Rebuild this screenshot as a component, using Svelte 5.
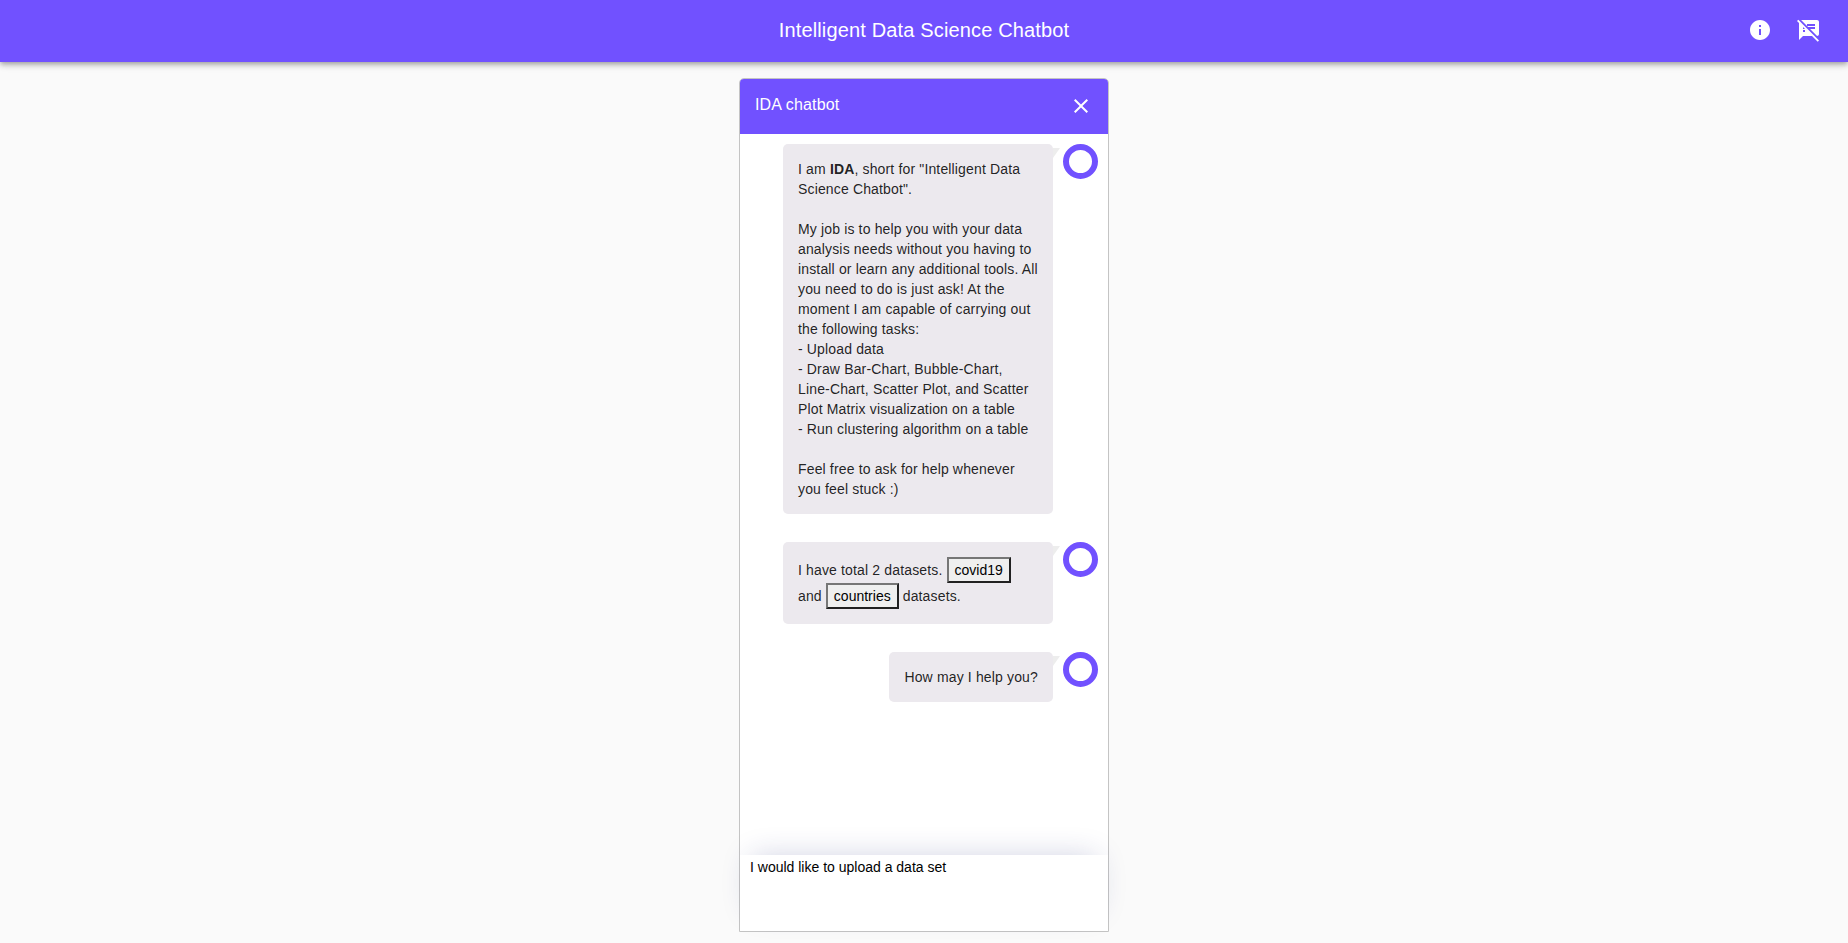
<script>
  let draft = $state('I would like to upload a data set');
</script>

<div class="page">
  <header class="appbar">
    <h1>Intelligent Data Science Chatbot</h1>
    <nav>
      <svg viewBox="0 0 24 24"><path d="M12 2C6.48 2 2 6.48 2 12s4.48 10 10 10 10-4.48 10-10S17.52 2 12 2zm1 15h-2v-6h2v6zm0-8h-2V7h2v2z" /></svg>
      <svg viewBox="0 0 24 24"><path d="M10.54 11l-.54-.54L7.54 8 6 6.46 2.38 2.84 1.27 1.73 0 3l2.01 2.01L2 22l4-4h9l5.73 5.73L22 22.46 17.54 18l-7-7zM8 14H6v-2h2v2zm-2-3V9l2 2H6zm14-9H4.08L10 7.92V6h8v2h-7.92l1 1H18v2h-4.92l6.99 6.99C21.14 17.95 22 17.08 22 16V4c0-1.1-.9-2-2-2z" /></svg>
    </nav>
  </header>

  <main class="chat">
    <div class="chat-head">
      <span>IDA chatbot</span>
      <svg viewBox="0 0 24 24"><path d="M19 6.41L17.59 5 12 10.59 6.41 5 5 6.41 10.59 12 5 17.59 6.41 19 12 13.41 17.59 19 19 17.59 13.41 12z" /></svg>
    </div>
    <div class="messages">
      <div class="row">
        <div class="bubble">
          I am <b>IDA</b>, short for "Intelligent Data Science Chatbot".<br /><br />
          My job is to help you with your data analysis needs without you having to install or learn any additional tools. All you need to do is just ask! At the moment I am capable of carrying out the following tasks:<br />
          - Upload data<br />
          - Draw Bar-Chart, Bubble-Chart, Line-Chart, Scatter Plot, and Scatter Plot Matrix visualization on a table<br />
          - Run clustering algorithm on a table<br /><br />
          Feel free to ask for help whenever you feel stuck :)
        </div>
        <div class="avatar"></div>
      </div>
      <div class="row">
        <div class="bubble">
          I have total 2 datasets. <button>covid19</button> and <button>countries</button> datasets.
        </div>
        <div class="avatar"></div>
      </div>
      <div class="row">
        <div class="bubble">How may I help you?</div>
        <div class="avatar"></div>
      </div>
    </div>
    <textarea bind:value={draft} spellcheck="false"></textarea>
  </main>
</div>

<style>
  :global(body) {
    margin: 0;
    background: #fafafa;
  }
  .page {
    height: 943px;
    overflow: hidden;
    font-family: 'Liberation Sans', Arial, sans-serif;
    font-size: 14px;
    line-height: 20px;
    letter-spacing: 0.15px;
    color: rgba(0, 0, 0, 0.87);
  }
  .appbar {
    height: 62px;
    display: grid;
    grid-template-columns: 1fr auto 1fr;
    align-items: center;
    background: #7151ff;
    color: #fff;
    box-shadow: 0 2px 4px -1px rgba(0, 0, 0, 0.2), 0 4px 5px rgba(0, 0, 0, 0.14), 0 1px 10px rgba(0, 0, 0, 0.12);
  }
  h1 {
    grid-column: 2;
    margin: 0 0 2px;
    font-size: 20px;
    font-weight: 400;
    line-height: 32px;
  }
  nav {
    display: flex;
    justify-content: flex-end;
    gap: 25px;
    padding: 0 27px 2px 0;
  }
  svg {
    display: block;
    width: 24px;
    height: 24px;
    fill: #fff;
  }
  .chat {
    box-sizing: border-box;
    width: 370px;
    height: 854px;
    margin: 16px auto 0;
    display: flex;
    flex-direction: column;
    border: 1px solid #c4c4c4;
    border-radius: 5px 5px 0 0;
    background: #fff;
  }
  .chat-head {
    box-sizing: border-box;
    height: 55px;
    flex: none;
    padding: 0 15px;
    display: flex;
    justify-content: space-between;
    align-items: center;
    border-radius: 4px 4px 0 0;
    background: #7151ff;
    color: #fff;
    font-size: 16px;
  }
  .chat-head span {
    margin-bottom: 4px;
  }
  .chat-head svg {
    margin-bottom: 2px;
  }
  .messages {
    flex: 1;
    display: flex;
    flex-direction: column;
    gap: 28px;
    padding: 10px 10px 0;
  }
  .row {
    display: flex;
    justify-content: flex-end;
    align-items: flex-start;
    gap: 10px;
  }
  .bubble {
    position: relative;
    box-sizing: border-box;
    max-width: 270px;
    padding: 15px;
    border-radius: 5px;
    background: #ece9ee;
  }
  .bubble::after {
    content: '';
    position: absolute;
    top: 4px;
    left: 100%;
    width: 7px;
    height: 10px;
    background: #ededed;
    clip-path: polygon(0 0, 100% 0, 0 100%);
  }
  button {
    padding: 1px 6px;
    border: 2px solid;
    border-color: #767676 #212121 #212121 #767676;
    border-radius: 0;
    background: #efefef;
    color: #000;
    font: inherit;
    letter-spacing: 0;
  }
  .avatar {
    box-sizing: border-box;
    width: 35px;
    height: 35px;
    flex: none;
    border: 6px solid #7151ff;
    border-radius: 50%;
    background: #fff;
  }
  textarea {
    box-sizing: border-box;
    display: block;
    width: 100%;
    height: 76px;
    flex: none;
    margin: 0;
    padding: 2px 10px;
    border: 0;
    outline: 0;
    resize: none;
    background: #fff;
    color: #000;
    font: inherit;
    letter-spacing: 0;
    box-shadow: 0 -10px 30px -12px rgba(30, 40, 120, 0.22);
  }
</style>
